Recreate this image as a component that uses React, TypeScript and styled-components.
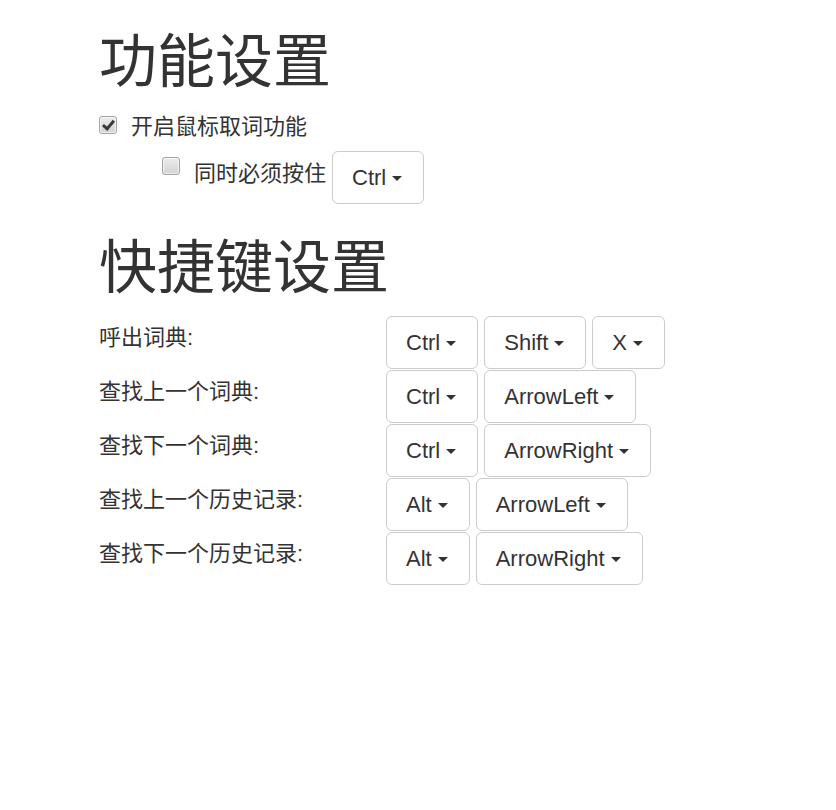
import React from "react";
import styled, { createGlobalStyle } from "styled-components";

const Global = createGlobalStyle`
  html, body { margin: 0; padding: 0; background: #fff; }
  body {
    font-family: "Liberation Sans", "Noto Sans CJK SC", sans-serif;
    color: #333;
  }
`;

const Page = styled.div`
  padding: 22px 0 0 99px;
`;

const Heading = styled.h1<{ $gap?: number }>`
  margin: 0 0 ${(p) => p.$gap ?? 10}px;
  font-size: 58px;
  font-weight: 400;
  line-height: 80px;
  color: #333;
  font-family: "Liberation Sans", "Noto Sans CJK SC", sans-serif;
`;

const CheckRow = styled.label<{ $indent?: number }>`
  display: flex;
  align-items: flex-start;
  gap: 14px;
  margin-left: ${(p) => p.$indent ?? 0}px;
  font-size: 22px;
  line-height: 30px;
`;

const CheckText = styled.span<{ $pad?: number }>`
  padding-top: ${(p) => p.$pad ?? 0}px;
`;

const Box = styled.input<{ $top?: number }>`
  appearance: none;
  -webkit-appearance: none;
  width: 18px;
  height: 18px;
  margin: ${(p) => p.$top ?? 4}px 0 0;
  border: 1px solid #a3a3a3;
  border-radius: 3px;
  background: linear-gradient(#ececec, #d4d4d4);
  box-shadow: inset 0 0 0 1px rgba(255, 255, 255, 0.6);
  position: relative;
  flex: none;
  &:checked::after {
    content: "";
    position: absolute;
    left: 5px;
    top: 1px;
    width: 4px;
    height: 9px;
    border: solid #3a3a3a;
    border-width: 0 3px 3px 0;
    transform: rotate(40deg);
  }
`;

const Grid = styled.div`
  display: grid;
  grid-template-columns: 287px auto;
  row-gap: 1px;
  justify-content: start;
`;

const RowLabel = styled.div`
  font-size: 22px;
  line-height: 30px;
  padding-top: 7px;
`;

const Keys = styled.div`
  display: flex;
  gap: 6px;
`;

const KeyButton = styled.button`
  display: inline-flex;
  align-items: center;
  height: 53px;
  padding: 0 21px 0 19px;
  border: 1px solid #ccc;
  border-radius: 6px;
  background: #fff;
  color: #333;
  font-family: "Liberation Sans", sans-serif;
  font-size: 22px;
  cursor: pointer;
`;

const Caret = styled.span`
  display: inline-block;
  width: 0;
  height: 0;
  margin-left: 6px;
  margin-top: 2px;
  border-top: 5px solid #333;
  border-left: 5.5px solid transparent;
  border-right: 5.5px solid transparent;
`;

const InlineRow = styled.div`
  display: flex;
  align-items: flex-start;
  gap: 6px;
  margin-top: 9px;
`;

const Section = styled.div<{ $top?: number }>`
  margin-top: ${(p) => p.$top ?? 0}px;
`;

const Key = ({ k }: { k: string }) => (
  <KeyButton>
    {k}
    <Caret />
  </KeyButton>
);

const shortcuts: [string, string[]][] = [
  ["呼出词典:", ["Ctrl", "Shift", "X"]],
  ["查找上一个词典:", ["Ctrl", "ArrowLeft"]],
  ["查找下一个词典:", ["Ctrl", "ArrowRight"]],
  ["查找上一个历史记录:", ["Alt", "ArrowLeft"]],
  ["查找下一个历史记录:", ["Alt", "ArrowRight"]],
];

export default function App() {
  return (
    <Page>
      <Global />
      <Heading>功能设置</Heading>
      <CheckRow>
        <Box type="checkbox" defaultChecked />
        开启鼠标取词功能
      </CheckRow>
      <InlineRow>
        <CheckRow $indent={63}>
          <Box type="checkbox" $top={6} />
          <CheckText $pad={8}>同时必须按住</CheckText>
        </CheckRow>
        <Key k="Ctrl" />
      </InlineRow>
      <Section $top={24}>
        <Heading $gap={8}>快捷键设置</Heading>
      </Section>
      <Grid>
        {shortcuts.map(([label, keys]) => (
          <React.Fragment key={label}>
            <RowLabel>{label}</RowLabel>
            <Keys>
              {keys.map((k, i) => (
                <Key key={i} k={k} />
              ))}
            </Keys>
          </React.Fragment>
        ))}
      </Grid>
    </Page>
  );
}
